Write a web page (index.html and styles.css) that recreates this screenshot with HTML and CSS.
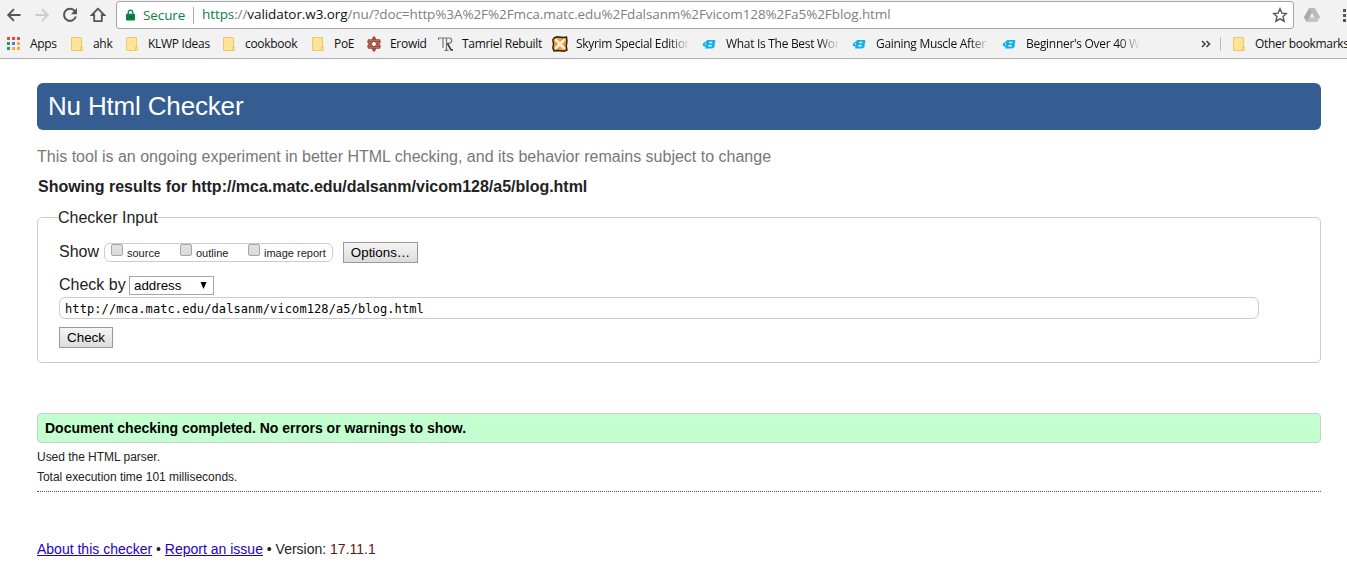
FILE: index.html
```html
<!DOCTYPE html>
<html lang="en">
<head>
<meta charset="utf-8">
<title>Showing results for http://mca.matc.edu/dalsanm/vicom128/a5/blog.html - Nu Html Checker</title>
<link rel="stylesheet" href="styles.css">
</head>
<body>
<svg class="defs" aria-hidden="true">
  <symbol id="folder" viewBox="0 0 16 16"><path d="M2.500 1.500h10v9.500h1v3.500h-11z" fill="#ffe497" stroke="#efc968"/><path d="M11.500 14.500v-3.500h2" fill="none" stroke="#efc968"/></symbol>
  <symbol id="bb" viewBox="0 0 16 16"><path fill="#14b1e7" fill-rule="evenodd" d="M5 4h8.500l-.7 1c1 .9.700 2-.4 2.800 1.200 1.700 0 4.700-2.900 4.700H3l.7-2C.8 10.600-.2 8.500 1.600 7L4 5.500zM7.300 5.700 7 7.200h2.500c1.200 0 1.200-1.500.2-1.500zM6.600 8.900l-.4 1.700h2.700c1.300 0 1.400-1.700.2-1.700zM4.100 7C2.600 7.600 2.500 8.700 3.800 8.900z"/></symbol>
</svg>
<header class="browser">
  <div class="toolbar">
    <svg class="nav" viewBox="0 0 16 16"><path d="M14.500 8H2.500M8 2.200 2.200 8 8 13.800" fill="none" stroke="#555" stroke-width="1.900"/></svg>
    <svg class="nav" viewBox="0 0 16 16"><path d="M1.500 8h12M8 2.200 13.800 8 8 13.800" fill="none" stroke="#ccc" stroke-width="1.900"/></svg>
    <svg class="nav" viewBox="0 0 16 16"><path d="M12.800 4.200A6 6 0 1 0 13.800 9.500" fill="none" stroke="#555" stroke-width="2"/><path d="M15 1v6.200H8.800z" fill="#555"/></svg>
    <svg class="nav" viewBox="0 0 16 16"><path d="M8 1.700 1.800 8h2.400v6.200h7.600V8h2.400z" fill="none" stroke="#555" stroke-width="1.800"/></svg>
    <div class="omnibox">
      <svg class="lock" viewBox="0 0 10 14"><path d="M1 5h8q1 0 1 1v5.500q0 1-1 1H1q-1 0-1-1V6q0-1 1-1z" fill="#0b8043"/><path d="M2.500 5.500V3.500a2.500 2.500 0 0 1 5 0v2" fill="none" stroke="#0b8043" stroke-width="1.400"/><circle cx="5" cy="8.700" r="1.100" fill="#075e31"/></svg>
      <span class="secure">Secure</span>
      <span class="url"><span class="scheme">https</span>://<span class="host">validator.w3.org</span>/nu/?doc=http%3A%2F%2Fmca.matc.edu%2Fdalsanm%2Fvicom128%2Fa5%2Fblog.html</span>
      <svg class="star" viewBox="0 0 16 16"><path d="m8 1.800 1.900 4.300 4.600.4-3.500 3.100 1.100 4.600L8 11.800l-4.100 2.400L5 9.600 1.500 6.500l4.600-.4z" fill="none" stroke="#555" stroke-width="1.400"/></svg>
    </div>
    <svg class="drive" viewBox="0 0 16 14"><path d="M5.300 0h5.400L16 9.200 13.300 14H2.700L0 9.200z" fill="#c5c5c5"/><path d="M5.300 0h5.400L16 9.200h-5.300z" fill="#bababa"/><path d="M0 9.200 5.300 0 8 4.700 2.700 14z" fill="#aaa"/><path d="M8 5l2.300 4.200H5.700z" fill="#f2f2f2"/></svg>
    <svg class="kebab" viewBox="0 0 4 14"><path d="M0 1h3v3H0zM0 6h3v3H0zM0 11h3v3H0z" fill="#555"/></svg>
  </div>
  <nav class="bookmarks">
    <a class="bm"><svg viewBox="0 0 16 16"><path fill="#f4433c" d="M1 1h3v3H1zM6 1h3v3H6zM11 1h3v3h-3z"/><path fill="#0da561" d="M1 6h3v3H1zM1 11h3v3H1z"/><path fill="#3c83f4" d="M6 6h3v3H6z"/><path fill="#fbae2c" d="M11 6h3v3h-3zM6 11h3v3H6zM11 11h3v3h-3z"/></svg><span>Apps</span></a>
    <a class="bm"><svg><use href="#folder"/></svg><span>ahk</span></a>
    <a class="bm"><svg><use href="#folder"/></svg><span>KLWP Ideas</span></a>
    <a class="bm"><svg><use href="#folder"/></svg><span>cookbook</span></a>
    <a class="bm"><svg><use href="#folder"/></svg><span>PoE</span></a>
    <a class="bm"><svg viewBox="0 0 16 16"><g fill="none" stroke="#9c4a38" stroke-width="1.200"><path d="M8 3 12.300 10.500H3.700zM8 13 3.700 5.500h8.600z"/><path d="M8 1 10 4h3.500l.5 2-1.500 2 1.500 2-.5 2H10l-2 3-2-3H2.500L2 10l1.500-2L2 6l.5-2H6z" stroke-width="1.500"/></g></svg><span>Erowid</span></a>
    <a class="bm"><svg viewBox="0 0 16 16"><path d="M.5 4V2H11c3.600 0 3.600 5 0 5.400H8.500M5 2v10M8.500 2v12M6.500 14.300h4" fill="none" stroke="#777" stroke-width="1.200"/><path d="m9.500 7.500 3.500 6.300h2" fill="none" stroke="#444" stroke-width="1.700"/></svg><span>Tamriel Rebuilt</span></a>
    <a class="bm"><svg viewBox="0 0 16 16"><path d="M2 2 5 .8l6 .7 3.500-.5.5 4-.7 5 .7 4-3 1.300-6-.8-4 .5L.8 12l.7-4L.8 4z" fill="#f39a35" stroke="#27211c" stroke-width="1.400"/><path d="m2.500 4 2-1.500L8 6l4-3.500 1.500 1.500L10 8l3.500 4-2 1.500L8 10l-4 3.500L2.500 12 6 8z" fill="#fff3df"/></svg><span class="fade">Skyrim Special Edition</span></a>
    <a class="bm"><svg><use href="#bb"/></svg><span class="fade">What Is The Best Wor</span></a>
    <a class="bm"><svg><use href="#bb"/></svg><span class="fade">Gaining Muscle After</span></a>
    <a class="bm"><svg><use href="#bb"/></svg><span class="fade">Beginner's Over 40 W</span></a>
    <svg class="more" viewBox="0 0 10 8"><path d="m1 1 3 3-3 3M5.500 1l3 3-3 3" fill="none" stroke="#444" stroke-width="1.600"/></svg>
    <a class="bm other"><svg><use href="#folder"/></svg><span>Other bookmarks</span></a>
  </nav>
</header>
<main>
  <h1>Nu Html Checker</h1>
  <p class="intro">This tool is an ongoing experiment in better HTML checking, and its behavior remains subject to change</p>
  <h2>Showing results for http://mca.matc.edu/dalsanm/vicom128/a5/blog.html</h2>
  <fieldset class="checker">
    <legend>Checker Input</legend>
    <div class="row show-row">
      <span class="show">Show</span>
      <div class="opts">
        <label><i class="cb"></i><span>source</span></label>
        <label><i class="cb"></i><span>outline</span></label>
        <label><i class="cb"></i><span>image report</span></label>
      </div>
      <button class="options">Options…</button>
    </div>
    <div class="row by-row"><span class="by">Check by</span><div class="select"><span>address</span><svg viewBox="0 0 8 7"><path d="M.5 0h6L3.500 7z"/></svg></div></div>
    <div class="doc">http://mca.matc.edu/dalsanm/vicom128/a5/blog.html</div>
    <button class="check">Check</button>
  </fieldset>
  <p class="success">Document checking completed. No errors or warnings to show.</p>
  <div class="stats"><p>Used the HTML parser.</p><p>Total execution time 101 milliseconds.</p></div>
  <p class="about"><a href="#">About this checker</a> • <a href="#">Report an issue</a> • Version: <span class="ver">17.11.1</span></p>
</main>
</body>
</html>
```
FILE: styles.css
```css
* { box-sizing: border-box; }
html, body { height: 100%; overflow: hidden; }
body { margin: 0; background: #fff; color: #222; font: 16px "Liberation Sans", Arial, sans-serif; }
h1, h2, p { margin: 0; }
svg { display: block; flex: none; }
.defs { display: none; }

.browser { height: 59px; background: #f2f2f2; border-bottom: 1px solid #b1b1b1; font-family: "Open Sans", "Noto Sans", sans-serif; overflow: hidden; }
.toolbar { display: flex; align-items: center; height: 30px; padding: 0 0 0 6px; }
.nav { width: 16px; height: 16px; margin-right: 12px; }
.omnibox { display: flex; align-items: center; width: 1178px; height: 28px; margin-left: -2px; background: #fff; border: 1px solid #a6a6a6; border-radius: 3px; font-size: 14px; white-space: nowrap; flex: none; }
.lock { width: 9px; height: 13px; margin-left: 9px; }
.secure { width: 50px; margin-left: 8px; color: #0b8043; font-size: 13.5px; letter-spacing: -.1px; flex: none; }
.url { height: 17px; line-height: 15px; padding-left: 8px; border-left: 1px solid #aaa; color: #808080; font-size: 13.5px; letter-spacing: -.09px; }
.scheme { color: #0b8043; }
.host { color: #111; }
.star { width: 16px; height: 16px; margin: 0 5px 0 auto; }
.drive { width: 16px; height: 14px; margin-left: 10px; }
.kebab { width: 4px; height: 14px; margin-left: 23px; }

.bookmarks { display: grid; grid-template-columns: 63px 55px 97px 89px 56px 72px 114px 150px 150px 150px 199px 30px auto; align-items: center; height: 28px; padding-left: 6px; font-size: 12px; color: #111; white-space: nowrap; }
.bm { display: flex; align-items: center; gap: 8px; height: 18px; line-height: 18px; letter-spacing: -.3px; }
.bm svg { width: 16px; height: 16px; }
.fade { width: 114px; -webkit-mask-image: linear-gradient(to right, #000 82%, transparent); mask-image: linear-gradient(to right, #000 82%, transparent); }
.more { width: 10px; height: 8px; }
.other { margin-left: -11px; padding-left: 10px; height: 14px; border-left: 1px solid #bbb; letter-spacing: -.33px; }

main { padding: 24px 26px 0 37px; }
h1 { height: 47px; padding-left: 11px; border-radius: 6px; background: #365d91; color: #fff; font-size: 26px; font-weight: 400; line-height: 46px; letter-spacing: -.17px; }
.intro { margin-top: 17px; color: #777; line-height: 20px; }
h2 { margin: 10px 0 0 1px; font-size: 16px; line-height: 20px; letter-spacing: -.015px; }
.checker { height: 156px; margin: 10px 0 0; padding: 0 21px; border: 1px solid #ccc; border-radius: 5px; min-width: 0; }
legend { height: 20px; line-height: 22px; margin-left: -1px; padding: 0; }
.row { display: flex; }
.show-row { height: 21px; margin-top: 15px; align-items: flex-start; }
.show { width: 45px; line-height: 20px; }
.opts { display: flex; width: 229px; height: 19px; margin-top: 1px; padding-left: 6px; border: 1px solid #ccc; border-radius: 6px; font-size: 11px; }
.opts label { display: flex; width: 69px; white-space: nowrap; }
.opts label:nth-child(2) { width: 68px; }
.opts span { margin-left: 3px; line-height: 18px; }
.cb { width: 12px; height: 12px; margin-right: 1px; flex: none; border: 1px solid #a6a6a6; border-radius: 2px; background: linear-gradient(#e2e2e2, #dadada); }
button { display: block; height: 21px; padding: 0; border: 1px solid #999; border-radius: 0; background: linear-gradient(#f5f5f5, #dcdcdc); color: #000; font: 13.333px/18px "Liberation Sans", Arial, sans-serif; }
.options { width: 75px; margin-left: 10px; }
.by-row { height: 20px; margin-top: 12px; }
.by { width: 70px; line-height: 19px; }
.select { display: flex; align-items: center; justify-content: space-between; width: 85px; height: 19px; margin-top: 1px; padding: 0 5px 0 4px; border: 1px solid #a6a6a6; color: #000; font-size: 13.333px; }
.select svg { width: 8px; height: 7px; }
.doc { width: 1200px; height: 22px; margin-top: 2px; padding-left: 5px; border: 1px solid #ccc; border-radius: 6px; color: #000; font: 12px/22px "DejaVu Sans Mono", monospace; letter-spacing: .1px; }
.check { width: 54px; margin-top: 8px; }
.success { height: 30px; margin-top: 50px; padding-left: 7px; border: 1px solid #ccc; border-radius: 4px; background: #c3ffcf; color: #000; font-size: 14px; font-weight: 700; line-height: 28px; }
.stats { height: 49px; padding-top: 4px; border-bottom: 1px dotted #555; font-size: 12px; line-height: 20px; letter-spacing: -.03px; }
.about { margin-top: 47px; font-size: 14px; line-height: 20px; }
.about a { color: #20c; }
.ver { color: #5c1818; }
```
